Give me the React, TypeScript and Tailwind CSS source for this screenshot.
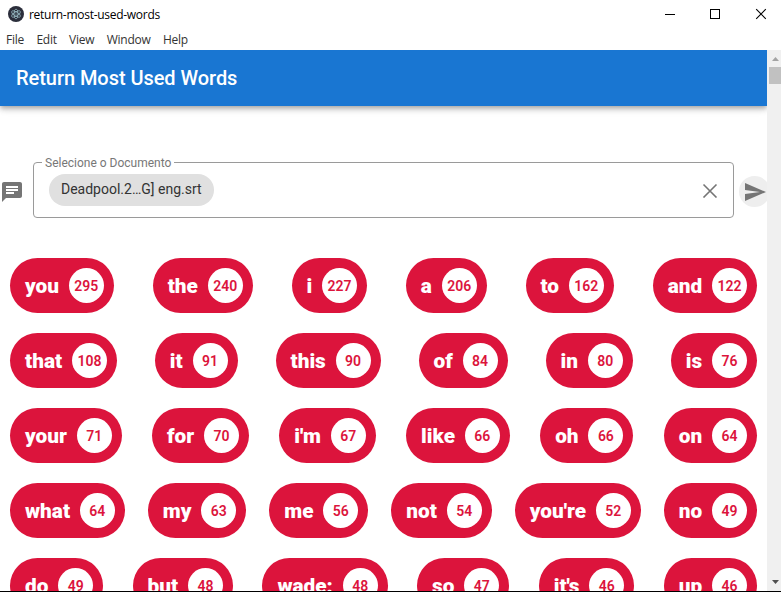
const rows: [string, number][][] = [
  [["you", 295], ["the", 240], ["i", 227], ["a", 206], ["to", 162], ["and", 122]],
  [["that", 108], ["it", 91], ["this", 90], ["of", 84], ["in", 80], ["is", 76]],
  [["your", 71], ["for", 70], ["i'm", 67], ["like", 66], ["oh", 66], ["on", 64]],
  [["what", 64], ["my", 63], ["me", 56], ["not", 54], ["you're", 52], ["no", 49]],
  [["do", 49], ["but", 48], ["wade:", 48], ["so", 47], ["it's", 46], ["up", 46]],
];

const menus = ["File", "Edit", "View", "Window", "Help"];

function TitleBar() {
  return (
    <div className="flex h-[30px] shrink-0 items-center pl-2 font-['Open_Sans',sans-serif] text-xs text-black">
      <svg className="mt-[-2px] h-4 w-4" viewBox="0 0 16 16">
        <circle cx="8" cy="8" r="8" fill="#2b2e3b" />
        <g fill="none" stroke="#9fc3cc" strokeWidth="0.7">
          <ellipse cx="8" cy="8" rx="5" ry="2" transform="rotate(30 8 8)" />
          <ellipse cx="8" cy="8" rx="5" ry="2" transform="rotate(90 8 8)" />
          <ellipse cx="8" cy="8" rx="5" ry="2" transform="rotate(150 8 8)" />
        </g>
        <circle cx="8" cy="8" r="0.6" fill="#9fc3cc" />
      </svg>
      <span className="ml-[5px] whitespace-nowrap tracking-[-0.28px]">return-most-used-words</span>
      <svg className="ml-auto h-[30px] w-[116px] shrink-0" viewBox="0 0 116 30" fill="none" stroke="#000">
        <path d="M0 14.5h10" shapeRendering="crispEdges" />
        <path d="M45.5 9.5h9v9h-9z" shapeRendering="crispEdges" />
        <path d="M91.2 9.2l9.6 9.6M100.8 9.2l-9.6 9.6" strokeWidth="1.1" />
      </svg>
    </div>
  );
}

function MenuBar() {
  return (
    <div className="flex h-5 shrink-0 items-center gap-[12.4px] pl-1.5 font-['Open_Sans',sans-serif] text-xs tracking-[-0.25px] text-[#333]">
      {menus.map((m) => (
        <span key={m}>{m}</span>
      ))}
    </div>
  );
}

function DocumentField() {
  return (
    <div className="mt-12 flex h-16 items-center">
      <svg className="ml-px mt-3 h-[22px] w-[22px] shrink-0" viewBox="1 1 22 22" fill="#757575">
        <path d="M20 2H4c-1.1 0-1.99.9-1.99 2L2 22l4-4h14c1.1 0 2-.9 2-2V4c0-1.1-.9-2-2-2zM6 9h12v2H6V9zm8 5H6v-2h8v2zm4-6H6V6h12v2z" />
      </svg>
      <fieldset className="ml-[10px] h-16 w-[701px] shrink-0 rounded border border-[#9a9a9a] pl-2">
        <legend className="h-4 px-[3px] pt-px text-xs leading-4 text-[#777]">
          Selecione o Documento
        </legend>
        <div className="mt-1 flex items-center justify-between pl-[7px] pr-[15px]">
          <span className="flex h-8 items-center rounded-full bg-[#e0e0e0] px-3 text-sm text-[#333]">
            <span className="-mt-0.5">Deadpool.2…G] eng.srt</span>
          </span>
          <svg className="h-4 w-4" viewBox="0 0 16 16" stroke="#757575" strokeWidth="1.6">
            <path d="M1.5 2.5l13 13M14.5 2.5l-13 13" />
          </svg>
        </div>
      </fieldset>
      <div className="ml-[5px] mt-[11px] flex h-[31px] w-[31px] shrink-0 items-center justify-center rounded-full bg-[#eee]">
        <svg className="h-6 w-6" viewBox="0 0 24 24" fill="#757575">
          <path d="M2.01 21L23 12 2.01 3 2 10l15 2-15 2z" />
        </svg>
      </div>
    </div>
  );
}

function WordChip({ word, count }: { word: string; count: number }) {
  return (
    <div className="m-[10px] flex h-[55px] items-center rounded-[30px] bg-[#dc143c] pl-[15px] pr-[10px]">
      <span className="text-[20.8px] leading-7 font-black text-white">{word}</span>
      <span className="ml-[9.8px] flex h-[35px] w-[35px] items-center justify-center rounded-full bg-white text-sm font-semibold text-[#dc143c]">
        {count}
      </span>
    </div>
  );
}

function ScrollBar() {
  return (
    <div className="flex w-[14px] shrink-0 flex-col bg-[#f0f0f0]">
      <svg className="h-[17px] w-[14px]" viewBox="0 0 14 17">
        <path d="M5 11l3.5-4 3.5 4z" fill="#a3a3a3" />
      </svg>
      <div className="ml-0.5 h-[17px] bg-[#c1c1c1]" />
      <svg className="mt-auto h-[17px] w-[14px]" viewBox="0 0 14 17">
        <path d="M5 6l3.5 4 3.5-4z" fill="#505050" />
      </svg>
    </div>
  );
}

export default function App() {
  return (
    <div className="flex h-[592px] w-[781px] flex-col overflow-hidden border-b border-black bg-white font-[Roboto,sans-serif]">
      <TitleBar />
      <MenuBar />
      <div className="flex min-h-0 flex-1">
        <main className="w-[767px] shrink-0 overflow-hidden">
          <header className="flex h-14 items-center bg-[#1976d2] px-4 text-xl font-medium tracking-[-0.05px] text-white shadow-[0_2px_4px_-1px_rgba(0,0,0,0.2),0_4px_5px_rgba(0,0,0,0.14),0_1px_10px_rgba(0,0,0,0.12)]">
            Return Most Used Words
          </header>
          <DocumentField />
          <div className="mt-[30px]">
            {rows.map((row, i) => (
              <div key={i} className="flex justify-between">
                {row.map(([word, count]) => (
                  <WordChip key={word} word={word} count={count} />
                ))}
              </div>
            ))}
          </div>
        </main>
        <ScrollBar />
      </div>
    </div>
  );
}
